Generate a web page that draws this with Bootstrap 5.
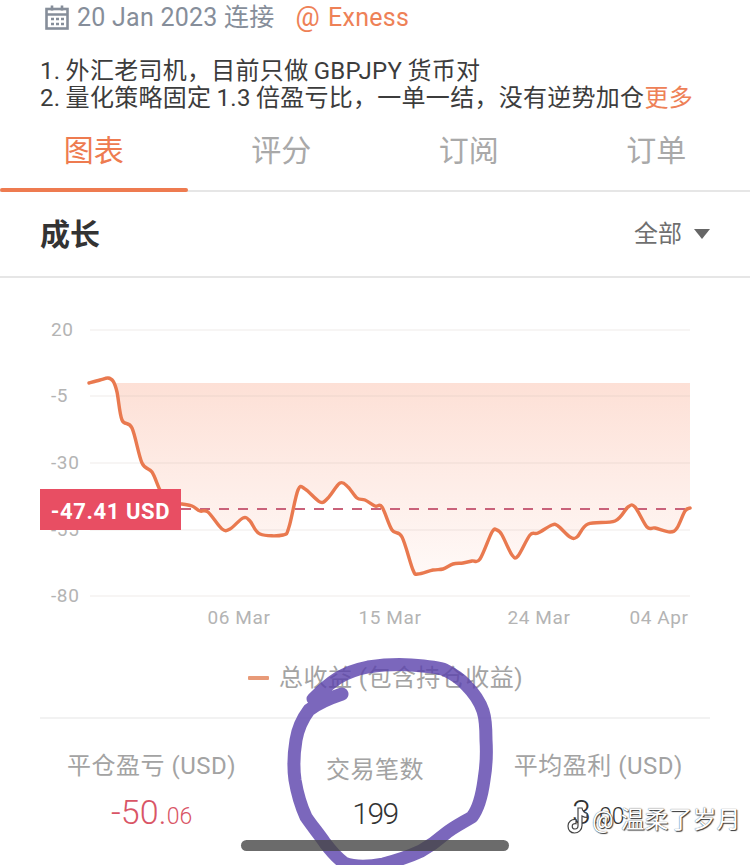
<!DOCTYPE html>
<html lang="en">
<head>
    <meta charset="UTF-8">
    <meta name="viewport" content="width=device-width, initial-scale=1.0">
    <title>成长</title>
    <link href="https://cdn.jsdelivr.net/npm/bootstrap@5.3.0/dist/css/bootstrap.min.css" rel="stylesheet">
    <style>
        html, body { height: 865px; overflow: hidden; }
        body { font-family: Roboto, "Noto Sans CJK SC", sans-serif; color: #3a3a3a; background: #fff; position: relative; }
        .meta-row { height: 35px; padding-left: 45px; font-size: 25px; color: #868e9a; gap: 8px; letter-spacing: .25px; }
        .meta-broker { color: #ee8157; margin-left: 13px; }
        .meta-at { font-size: 27px; margin-right: 8px; }
        .intro { padding: 23px 40px 0; font-size: 24px; line-height: 27px; height: 76px; color: #3c3c3c; white-space: nowrap; letter-spacing: .28px; word-spacing: -1px; }
        .more-link { color: #ee8157; }
        .tab-row { height: 81px; border-bottom: 2px solid #e6e6e6; }
        .tab-item { width: 25%; text-align: center; font-size: 30px; line-height: 80px; color: #a9a9a9; position: relative; }
        .tab-item.is-active { color: #ee7b50; }
        .tab-item.is-active::after { content: ""; position: absolute; left: 0; right: 0; bottom: -2px; height: 4px; background: #ee7b50; border-radius: 2px; }
        .section-head { height: 86px; padding: 0 40px; border-bottom: 2px solid #e6e6e6; }
        .section-title { font-size: 30px; font-weight: 700; color: #333; }
        .range-pick { font-size: 24px; color: #6f6f6f; gap: 12px; }
        .range-caret { width: 0; height: 0; border-left: 8px solid transparent; border-right: 8px solid transparent; border-top: 10px solid #666; }
        .chart-box { height: 365px; }
        .chart-box svg { display: block; }
        .axis-text { font-family: Roboto, sans-serif; font-size: 19px; fill: #b4b4b4; letter-spacing: .6px; }
        .legend-row { height: 76px; margin: 0 40px; border-bottom: 2px solid #f2f2f2; font-size: 24px; color: #a3a3a3; gap: 10px; padding: 0 0 5px 21px; letter-spacing: .45px; }
        .legend-mark { width: 21px; height: 4px; background: #e89a78; border-radius: 1px; }
        .stat-row { margin: 0 40px; }
        .stat-cell { width: 33.333%; text-align: center; padding-top: 32px; }
        .stat-label { font-size: 24px; color: #a3a3a3; line-height: 30px; letter-spacing: .5px; white-space: nowrap; }
        .stat-label-low { margin-top: 4px; }
        .stat-num { font-size: 34px; font-weight: 300; line-height: 40px; margin-top: 11px; color: #333; }
        .stat-low { margin-top: 9px; font-size: 30px; letter-spacing: -1.5px; }
        .stat-num small { font-size: 23px; }
        .stat-red { color: #d95566; }
        .price-tag { position: absolute; left: 40px; top: 489px; width: 141px; height: 41px; background: #e84e63; color: #fff; font-size: 22px; font-weight: 700; line-height: 45px; text-align: center; letter-spacing: .6px; }
        .pen-mark { position: absolute; left: 0; top: 0; pointer-events: none; filter: blur(.6px); }
        .home-bar { position: absolute; left: 241px; top: 840px; width: 268px; height: 11px; background: rgba(70,70,70,.8); border-radius: 6px; }
        .water-mark { position: absolute; left: 567px; top: 803px; font-size: 24px; line-height: 34px; color: #fff; white-space: nowrap; gap: 4px; text-shadow: 1px 1px 1px #333, 0 0 1px #444; }
        .water-name { margin-left: 3px; }
    </style>
</head>
<body>
    <div class="d-flex align-items-center meta-row">
        <svg width="24" height="25" viewBox="0 0 24 25" fill="none" stroke="#868e9a" stroke-width="2.6">
            <rect x="1.5" y="4" width="21" height="19.5" />
            <path d="M1.5 9.5h21M7 0.5v5M17 0.5v5" />
            <path d="M6 14h3M11 14h3M16 14h3M6 19h3M11 19h3M16 19h3" stroke-width="2.4" />
        </svg>
        <span>20 Jan 2023 连接</span>
        <span class="meta-broker"><span class="meta-at">@</span>Exness</span>
    </div>

    <div class="intro">
        <div>1. 外汇老司机，目前只做 GBPJPY 货币对</div>
        <div>2. 量化策略固定 1.3 倍盈亏比，一单一结，没有逆势加仓<span class="more-link">更多</span></div>
    </div>

    <div class="d-flex tab-row">
        <div class="tab-item is-active">图表</div>
        <div class="tab-item">评分</div>
        <div class="tab-item">订阅</div>
        <div class="tab-item">订单</div>
    </div>

    <div class="d-flex justify-content-between align-items-center section-head">
        <div class="section-title">成长</div>
        <div class="d-flex align-items-center range-pick"><span>全部</span><span class="range-caret"></span></div>
    </div>

    <div class="chart-box">
        <svg id="growthChart" width="750" height="365" viewBox="0 278 750 365"></svg>
    </div>

    <div class="d-flex justify-content-center align-items-center legend-row">
        <span class="legend-mark"></span><span>总收益 (包含持仓收益)</span>
    </div>

    <div class="d-flex stat-row">
        <div class="stat-cell">
            <div class="stat-label">平仓盈亏 (USD)</div>
            <div class="stat-num stat-red">-50.<small>06</small></div>
        </div>
        <div class="stat-cell">
            <div class="stat-label stat-label-low">交易笔数</div>
            <div class="stat-num stat-low">199</div>
        </div>
        <div class="stat-cell">
            <div class="stat-label">平均盈利 (USD)</div>
            <div class="stat-num">3.<small>00</small></div>
        </div>
    </div>

    <div class="price-tag">-47.41 USD</div>
    <svg class="pen-mark" width="750" height="865" viewBox="0 0 750 865" fill="none">
        <path d="M313 699C322 690 330 683 338 678C348 672 358 669 368 667C382 665 398 664 411 665C426 666 438 667 445 670C453 674 460 678 466 685C474 693 480 702 483 711C486 720 486 730 486 740C487 755 486 768 484 780C482 795 479 808 472 817C462 823 452 828 445 834C437 841 430 846 421 851C408 857 396 861 383 864C368 867 354 867 344 863C336 857 331 851 325 843C319 834 312 826 306 817C300 804 297 792 295 780C293 766 294 752 296 740C298 728 303 718 309 710C318 703 330 698 342 694" stroke="#5a41ab" stroke-opacity=".8" stroke-width="13" stroke-linecap="round" stroke-linejoin="round" />
    </svg>
    <div class="home-bar"></div>
    <div class="d-flex align-items-center water-mark">
        <svg width="21" height="28" viewBox="0 0 21 28" fill="#fff" stroke="#444" stroke-width="1.2">
            <path d="M11 2h4c.5 3 2.500 5 5 5.500v4c-2 0-3.500-.5-5-1.500v9.500c0 4.500-3.500 7.500-7.500 7.500S1 24 1 20s3.500-7 8-6.500v4.200c-2-.5-3.800.7-3.800 2.500 0 1.700 1.300 2.800 2.800 2.800 1.700 0 3-1.200 3-3.200z" />
        </svg>
        <span>@</span><span class="water-name">温柔了岁月</span>
    </div>

    <script>
        // Points read off the reference, in page coordinates
        const pts = [[89,383],[100,380],[108,378],[113,381],[117,392],[122,420],[132,428],[142,463],[152,472],[160,490],[168,502],[182,504],[192,506],[200,511],[208,512],[222,529],[230,529],[243,518],[250,521],[260,534],[283,535],[289,527],[298,490],[305,489],[320,502],[328,498],[340,483],[348,487],[357,498],[365,500],[375,506],[382,507],[392,530],[402,537],[413,570],[418,574],[433,570],[443,569],[453,564],[463,563],[472,561],[480,559],[492,532],[497,530],[502,535],[512,555],[518,556],[530,535],[538,533],[552,525],[558,526],[570,537],[577,537],[588,524],[615,521],[628,507],[635,507],[647,527],[655,528],[670,532],[677,528],[685,511],[690,508]];

        // Catmull-Rom through the points, to keep the curve soft
        function smooth(p) {
            let d = `M${p[0][0]} ${p[0][1]}`;
            for (let i = 0; i < p.length - 1; i++) {
                const a = p[i - 1] || p[i], b = p[i], c = p[i + 1], e = p[i + 2] || c;
                const c1x = b[0] + (c[0] - a[0]) / 6, c1y = b[1] + (c[1] - a[1]) / 6;
                const c2x = c[0] - (e[0] - b[0]) / 6, c2y = c[1] - (e[1] - b[1]) / 6;
                d += `C${c1x.toFixed(1)} ${c1y.toFixed(1)} ${c2x.toFixed(1)} ${c2y.toFixed(1)} ${c[0]} ${c[1]}`;
            }
            return d;
        }

        const line = smooth(pts);
        const grid = [[330,'20'],[396,'-5'],[463,'-30'],[530,'-55'],[596,'-80']];
        const ticks = [[239,'06 Mar'],[390,'15 Mar'],[539,'24 Mar'],[659,'04 Apr']];

        document.getElementById('growthChart').innerHTML = `
            <defs>
                <linearGradient id="areaFill" gradientUnits="userSpaceOnUse" x1="0" y1="383" x2="0" y2="590">
                    <stop offset="0" stop-color="#fde0d6" />
                    <stop offset="1" stop-color="#fffbfa" />
                </linearGradient>
                <clipPath id="areaClip"><rect x="89" y="383" width="601" height="220" /></clipPath>
            </defs>
            <path d="${line}L690 383L89 383Z" fill="url(#areaFill)" clip-path="url(#areaClip)" />
            ${grid.map(g => `<line x1="90" x2="690" y1="${g[0]}" y2="${g[0]}" stroke="#c9b9b0" stroke-opacity=".14" stroke-width="2" />
            <text class="axis-text" x="51" y="${g[0] + 6}">${g[1]}</text>`).join('')}
            ${ticks.map(t => `<text class="axis-text" x="${t[0]}" y="624" text-anchor="middle">${t[1]}</text>`).join('')}
            <line x1="181" x2="690" y1="509" y2="509" stroke="#c9627a" stroke-width="2" stroke-dasharray="10 9" />
            <path d="${line}" fill="none" stroke="#e9794f" stroke-width="3.4" stroke-linejoin="round" stroke-linecap="round" />
        `;
    </script>

    <script src="https://cdn.jsdelivr.net/npm/bootstrap@5.3.0/dist/js/bootstrap.bundle.min.js"></script>
</body>
</html>
